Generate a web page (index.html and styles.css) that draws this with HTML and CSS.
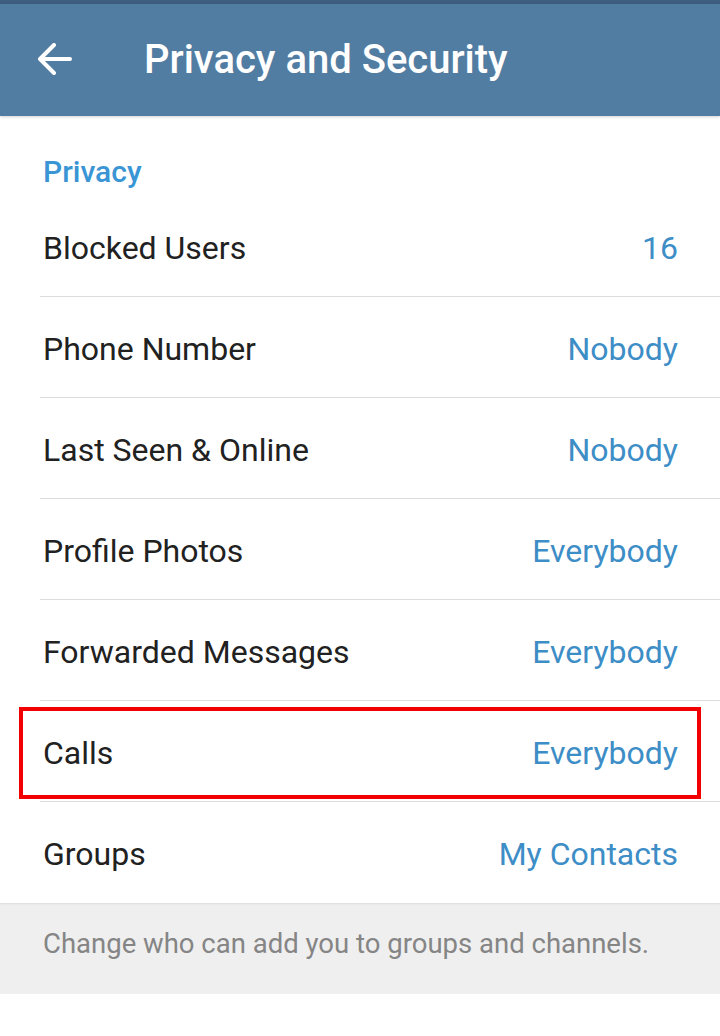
FILE: index.html
```html
<!DOCTYPE html>
<html>
<head>
<meta charset="utf-8">
<link rel="stylesheet" href="styles.css">
</head>
<body>
<div class="statusbar"></div>
<header class="appbar">
  <button class="back" aria-label="Back">
    <svg width="34" height="32" viewBox="0 0 34 32"><path d="M2 16 H32 M16 2 L2 16 L16 30" fill="none" stroke="#fff" stroke-width="4" stroke-linecap="round" stroke-linejoin="round"/></svg>
  </button>
  <h1 class="title">Privacy and Security</h1>
</header>
<main class="content">
  <div class="section-head">Privacy</div>
  <ul class="list">
    <li class="row"><span class="label">Blocked Users</span><span class="value">16</span></li>
    <li class="row"><span class="label">Phone Number</span><span class="value">Nobody</span></li>
    <li class="row"><span class="label">Last Seen &amp; Online</span><span class="value">Nobody</span></li>
    <li class="row"><span class="label">Profile Photos</span><span class="value">Everybody</span></li>
    <li class="row"><span class="label">Forwarded Messages</span><span class="value">Everybody</span></li>
    <li class="row highlight"><span class="label">Calls</span><span class="value">Everybody</span></li>
    <li class="row last"><span class="label">Groups</span><span class="value">My Contacts</span></li>
  </ul>
  <div class="info">Change who can add you to groups and channels.</div>
</main>
</body>
</html>
```
FILE: styles.css
```css
* { box-sizing: border-box; }
html, body { margin: 0; padding: 0; background: #fff; }
body { font-family: Roboto, "Noto Sans", sans-serif; width: 720px; }
.statusbar { height: 4px; background: #3f5f80; }
.appbar {
  height: 112px;
  background: #527da3;
  display: flex;
  align-items: center;
  position: relative;
  z-index: 1;
  box-shadow: 0 1px 3px rgba(0,0,0,0.18);
}
.back {
  width: 144px; height: 112px;
  padding: 0 0 2px 38px;
  border: 0; background: none;
  display: flex; align-items: center;
}
.back svg { display: block; }
.title {
  margin: 0;
  color: #fff;
  font-size: 40px;
  font-weight: 500;
  letter-spacing: 0;
  padding-bottom: 2px;
}
.content { display: flex; flex-direction: column; }
.section-head {
  height: 80px;
  padding: 40px 0 0 43px;
  color: #3a95d5;
  font-size: 30px;
  font-weight: 500;
  line-height: 32px;
}
.list { list-style: none; margin: 0; padding: 0; }
.row {
  height: 101px;
  margin-left: 40px;
  padding: 3px 42px 0 3px;
  border-bottom: 1px solid #dcdcdc;
  display: flex;
  justify-content: space-between;
  align-items: center;
  font-size: 32px;
  position: relative;
}
.row.last { border-bottom: 0; height: 101px; }
.label { color: #212121; }
.value { color: #3d8dc6; }
.highlight::after {
  content: "";
  position: absolute;
  left: -21px; top: 6px; right: 19px; bottom: 2px;
  border: 4px solid #f20000;
}
.info {
  background: #efefef;
  height: 91px;
  padding: 24px 42px 0 43px;
  color: #858585;
  font-size: 27.5px;
  line-height: 34px;
  box-shadow: inset 0 2px 2px -1px rgba(0,0,0,0.08);
}
```
